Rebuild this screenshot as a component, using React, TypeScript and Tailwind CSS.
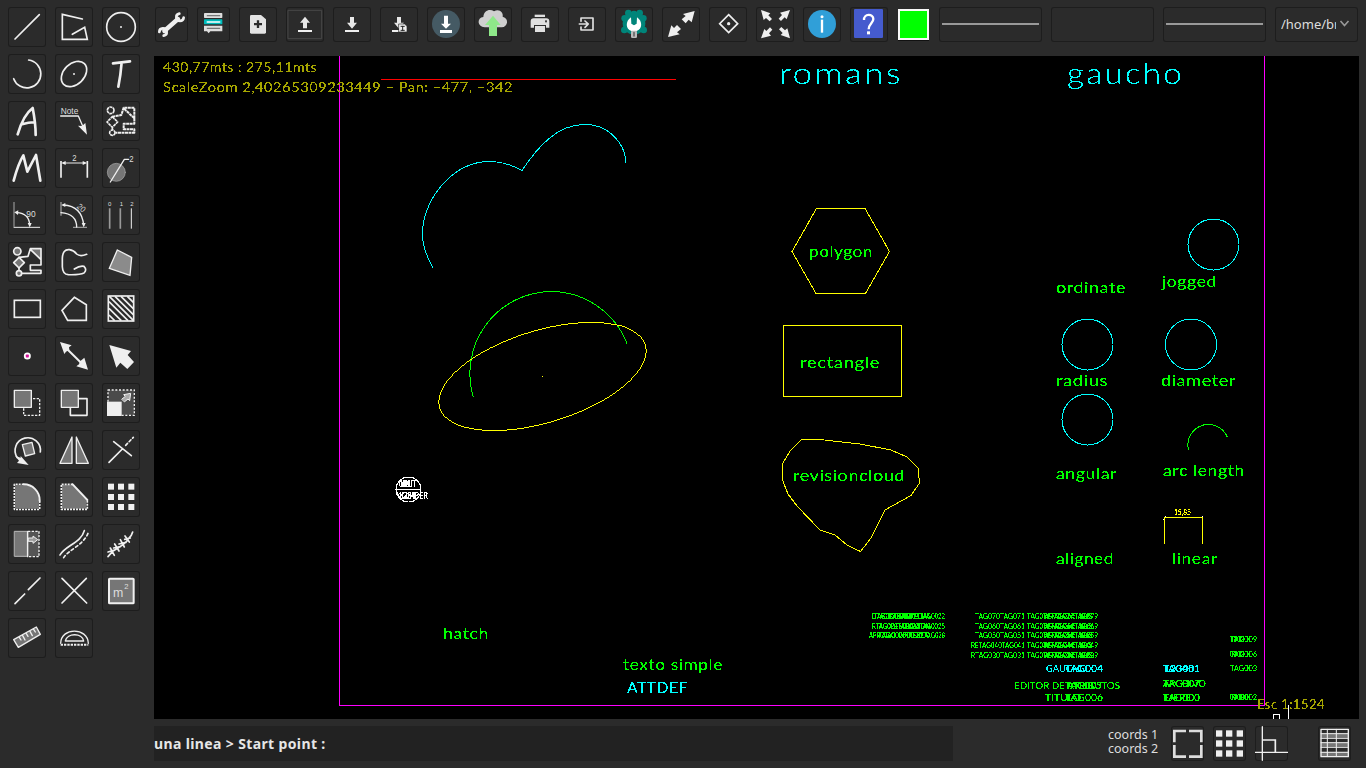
import React from "react";

const W = "#efefef";
const G = "#767676";

function Tool({ x, y, w = 38, h = 40, children }: { x: number; y: number; w?: number; h?: number; children?: React.ReactNode }) {
  return (
    <button className="block shrink-0 rounded-[3px] shadow-[inset_0_0_0_1px_#1d1d1d]">
      <svg
        width={w}
        height={h}
        viewBox={`${x} ${y} ${w * 3} ${h * 3}`}
        fill="none"
        stroke={W}
        strokeWidth="5"
        strokeLinecap="round"
        strokeLinejoin="round"
        fontFamily="'Liberation Sans', sans-serif"
        className="block"
      >
        {children}
      </svg>
    </button>
  );
}

function T({ x, y, s, children, r, w }: { x: number; y: number; s: number; children: string; r?: number; w?: number }) {
  return (
    <text x={x} y={y} fontSize={s} fill="#dedede" stroke="none" textLength={w} lengthAdjust="spacingAndGlyphs" transform={r ? `rotate(${r} ${x} ${y})` : undefined}>
      {children}
    </text>
  );
}

const P = ({ p, f = W }: { p: string; f?: string }) => <polygon points={p} fill={f} stroke="none" />;

function Dots({ xs, ys, s = 18 }: { xs: number[]; ys: number[]; s?: number }) {
  return (
    <g fill={W} stroke="none">
      {ys.map((y) => xs.map((x) => <rect key={`${x}-${y}`} x={x} y={y} width={s} height={s} />))}
    </g>
  );
}

const sidebar: React.ReactNode[][] = [
  [
    <path d="M45 117L118 44" />,
    <path d="M247 57L187 43V118H262L254 82L217 103" strokeLinejoin="miter" />,
    <><circle cx="363" cy="81" r="43" /><circle cx="363" cy="81" r="3" fill={W} stroke="none" /></>,
  ],
  [
    <path d="M86 180A42 42 0 1 1 41 236" />,
    <><ellipse cx="222" cy="222" rx="44" ry="31" transform="rotate(-45 222 222)" /><circle cx="222" cy="222" r="3" fill={W} stroke="none" /></>,
    <path d="M339 190L390 184M365 187Q362 225 355 260" strokeWidth="8" />,
  ],
  [
    <path d="M53 403Q70 345 98 324Q107 370 107 405M66 373Q90 366 105 367" strokeWidth="8" />,
    <><T x={182} y={343} s={25} w={53}>Note</T><path d="M182 348H235L249 380" strokeWidth="4" /><P p="261,404 234,377 246,378 256,369" /></>,
    <g strokeWidth="6" strokeDasharray="9 1.5" strokeLinecap="butt">
      <circle cx="332" cy="331" r="10" strokeWidth="5" />
      <path d="M337 350L353 366L337 382L321 366ZM337 382V390" strokeWidth="5" />
      <circle cx="337" cy="398" r="8" strokeWidth="5" />
      <path d="M337 350L364 345L371 323H403V355L371 325M403 355V371H371V388H403V398H346" />
    </g>,
  ],
  [
    <path d="M41 542Q55 490 70 466L82 515L108 465L121 542" strokeWidth="8" />,
    <><path d="M183 483V533M262 483V533" strokeWidth="5" strokeLinecap="butt" /><path d="M190 489H255" strokeWidth="3" /><P p="184,489 197,483 197,495" /><P p="261,489 248,483 248,495" /><T x={217} y={483} s={26} w={13}>2</T></>,
    <><circle cx="349" cy="517" r="27" fill={G} stroke="#aaa" strokeWidth="2" /><path d="M331 546L373 478H386" strokeWidth="4" /><T x={388} y={486} s={27} w={13}>2</T></>,
  ],
  [
    <><path d="M42 606V680" stroke="#777" strokeWidth="5" strokeLinecap="butt" /><path d="M42 682H119" strokeWidth="3" /><path d="M50 638Q88 640 89 676" strokeWidth="4" /><P p="43,637 55,631 54,645" /><P p="89,682 83,669 95,669" /><T x={79} y={652} s={28} w={28}>90</T></>,
    <><path d="M183 606V647M219 682H261" stroke="#999" strokeWidth="4" strokeLinecap="butt" /><path d="M190 615Q246 618 251 676M183 638Q230 642 230 681" strokeWidth="4" /><P p="184,615 196,609 196,621" /><P p="251,682 245,669 257,669" /><T x={229} y={622} s={25} w={25} r={42}>20</T></>,
    <><path d="M329 625V686M361 625V686" stroke="#999" strokeLinecap="butt" /><path d="M394 625V686" strokeWidth="3" strokeLinecap="butt" /><T x={324} y={619} s={18}>0</T><T x={359} y={619} s={18}>1</T><T x={391} y={619} s={18}>2</T></>,
  ],
  [
    <><circle cx="52" cy="49" r="11" fill={G} /><path d="M91 41H123V74Z" fill={G} stroke="none" /><path d="M57 67L84 64L91 41H123V74L91 43M123 74V90H91V106H123V115H66M57 99V107" /><path d="M57 67L73 83L57 99L41 83Z" fill={G} /><circle cx="57" cy="115" r="8" fill={G} /></>,
    <path d="M223 102Q240 91 252 94Q262 105 252 114Q240 120 205 119Q188 118 187 95V70Q188 42 208 44Q221 46 230 57Q240 66 260 58" strokeWidth="5" />,
    <path d="M352 45L395 67L390 121L328 100Z" fill="#8b8b8b" strokeWidth="4" strokeLinejoin="miter" />,
  ],
  [
    <rect x="43" y="196" width="78" height="51" strokeLinejoin="miter" />,
    <path d="M223 187L259 209V256H203L186 226Z" strokeLinejoin="miter" />,
    <><rect x="325" y="183" width="76" height="75" strokeLinejoin="miter" /><path d="M327 240L344 257M327 220L364 257M327 200L384 257M328 184L400 256M345 184L400 239M363 184L400 221M382 184L400 202" strokeLinecap="butt" /></>,
  ],
  [
    <><circle cx="82" cy="363" r="10.500" fill="#fff" stroke="none" /><rect x="77.500" y="358.500" width="9" height="9" rx="2" fill="#d5149a" stroke="none" /></>,
    <><path d="M195 336L250 390" strokeWidth="6" /><P p="180,321 215,331 207,337 208,345 198,350 193,357" /><P p="264,404 229,394 237,388 240,379 245,375 253,368" /></>,
    <P p="328,330 393,348 383,360 402,381 382,402 361,383 349,398" />,
  ],
  [
    <><path d="M71 520V541H119V491H97" strokeDasharray="7 4" strokeLinecap="butt" strokeWidth="4" /><rect x="43" y="466" width="51" height="51" fill={G} strokeWidth="4" /></>,
    <><rect x="211" y="491" width="50" height="50" /><rect x="184" y="466" width="51" height="51" fill={G} strokeWidth="4" /></>,
    <><rect x="324" y="465" width="79" height="76" fill="#4b4b4b" strokeDasharray="6 5" strokeLinecap="butt" strokeWidth="4" /><rect x="321" y="500" width="44" height="43" fill={W} stroke="none" /><path d="M366 492L376 484L371 479L392 475L389 497L384 492L374 500Z" fill="#aaa" strokeWidth="3" /></>,
  ],
  [
    <><path d="M121 651A38 38 0 1 0 52 668" /><P p="45,662 62,668 62,663 86,690 51,684 57,677" /><path d="M67 629L96 622L104 656L76 663Z" fill={G} strokeWidth="4" /></>,
    <g fill={G} strokeWidth="4"><path d="M216 606V685H180Z" /><path d="M229 606V685H265Z" /></g>,
    <><path d="M327 682L367 642M341 620L394 662" /><path d="M377 631L400 607" strokeDasharray="8 7" /></>,
  ],
  [
    <><path d="M71 43H43V118H119V92" fill="none" strokeDasharray="6 3" strokeLinecap="butt" /><path d="M45 45H71A47 47 0 0 1 117 92V116H45Z" fill={G} stroke="none" /><path d="M71 43A48 48 0 0 1 119 92" strokeWidth="6" /></>,
    <><path d="M186 45H218L259 92V116H186Z" fill={G} stroke="none" /><path d="M218 43H184V118H262V90" strokeDasharray="6 3" strokeLinecap="butt" /><path d="M218 43L262 90" strokeWidth="6" /></>,
    <Dots xs={[324, 354, 385]} ys={[41, 72, 102]} />,
  ],
  [
    <><rect x="44" y="184" width="38" height="75" fill={G} stroke="#bbb" strokeWidth="3" /><rect x="83" y="184" width="34" height="75" fill="#555" stroke="none" /><path d="M83 184V260" strokeWidth="4" /><path d="M84 184H117V260H84" strokeDasharray="7 4" strokeWidth="4" strokeLinecap="butt" /><path d="M86 204H99V198L113 209L99 220V214H86Z" fill="#999" strokeWidth="3" /></>,
    <><path d="M180 255C193 228 244 218 253 182" /><path d="M191 263C204 241 250 225 264 190" strokeDasharray="8 8" /></>,
    <path d="M324 260L338 244Q379 220 386 205Q395 198 398 186M331 234L343 256M324 246L344 240M344 222L357 243M341 234L361 230M361 209L373 231M357 222L378 217M375 198L388 216M374 208L391 204" strokeWidth="5" />,
  ],
  [
    <path d="M45 401L74 372M85 359L120 324" />,
    <path d="M186 325L260 399M259 325L186 399" />,
    <><rect x="327" y="326" width="74" height="74" rx="2" fill={G} strokeWidth="6" /><T x={339} y={382} s={37}>m</T><T x={373} y={357} s={23}>2</T></>,
  ],
  [
    <path d="M41 509L109 471L121 493L55 532ZM58 502L63 510M68 497L75 510M79 491L84 499M90 484L97 497M101 478L106 486" fill={G} strokeWidth="4" />,
    <><path d="M182 520C183 471 263 471 265 520" strokeWidth="4" /><path d="M182 524H265" strokeWidth="6" strokeDasharray="7 3" strokeLinecap="butt" /><path d="M196 513C201 488 247 488 251 513Z" strokeWidth="4" /></>,
  ],
];

function Arrow({ x, y, r = 0 }: { x: number; y: number; r?: number }) {
  return <polygon points="0,0 28,10 22,16 33,27 26,34 15,24 8,30" transform={`translate(${x} ${y}) rotate(${r})`} fill={W} stroke="none" />;
}

function TopBar() {
  return (
    <div className="flex h-14 items-start gap-[9px] pl-px pt-[7px]">
      <Tool x={15} y={21} w={33} h={35}>
        <path d="M43 93L84 57" strokeWidth="13" />
        <path d="M88 41A11 11 0 1 0 101 53" strokeWidth="8" />
        <path d="M28 96A11 11 0 1 1 41 107" strokeWidth="8" />
      </Tool>
      <Tool x={141} y={21} w={33} h={35}>
        <g fill="#ddd" stroke="none"><rect x="162" y="39" width="55" height="15" rx="2" /><rect x="162" y="58" width="55" height="15" rx="2" fill="#00bcbc" /><path d="M162 77H217V94H181L176 100L171 94H162Z" /></g>
        <path d="M172 47H209M172 85H209" stroke="#777" strokeWidth="4" /><path d="M172 66H209" stroke="#fff" />
      </Tool>
      <Tool x={267} y={21} h={35}>
        <path d="M304 45H333L348 58V97Q348 101 344 101H304Q300 101 300 97V49Q300 45 304 45Z" fill="#e4e4e4" stroke="none" />
        <path d="M324 61V84M312 72.500H336" stroke="#2b2b2b" strokeWidth="7" strokeLinecap="butt" />
      </Tool>
      <Tool x={408} y={21} h={35}>
        <rect x="415" y="31" width="100" height="85" stroke="#484848" strokeWidth="3" />
        <P p="465,50 480,68 471,68 471,85 459,85 459,68 450,68" f="#e8e8e8" /><path d="M444 93H486" strokeLinecap="butt" strokeWidth="6" />
      </Tool>
      <Tool x={549} y={21} h={35}>
        <P p="600,51 612,51 612,68 621,68 606,86 591,68 600,68" f="#e8e8e8" /><path d="M585 93H627" strokeLinecap="butt" strokeWidth="6" />
      </Tool>
      <Tool x={690} y={21} h={35}>
        <P p="741,51 753,51 753,68 762,68 747,86 732,68 741,68" f="#e8e8e8" /><path d="M726 93H768" strokeLinecap="butt" strokeWidth="6" />
        <path d="M747 72H764L771 79V96H747Z" fill="#eee" stroke="#2b2b2b" strokeWidth="2" /><path d="M753 79H763M758 79V91M753 91H763" stroke="#222" strokeWidth="3" />
      </Tool>
      <Tool x={831} y={21} h={35}>
        <circle cx="888" cy="72" r="42" fill="#455a64" stroke="none" />
        <P p="882,47 894,47 894,71 903,71 888,86 873,71 882,71" f="#fff" /><path d="M870 94.500H906" stroke="#fff" strokeLinecap="butt" strokeWidth="9" />
      </Tool>
      <Tool x={972} y={21} h={35}>
        <path d="M1004 82C981 80 980 53 1000 51C1001 31 1020 25 1032 34C1047 24 1061 37 1058 50C1078 55 1074 81 1055 82Z" fill="#cfcfcf" stroke="none" />
        <P p="1029,47 1052,75 1041,75 1041,108 1017,108 1017,75 1005,75" f="#8ee889" />
      </Tool>
      <Tool x={1113} y={21} h={35}>
        <g fill="#e0e0e0" stroke="none"><rect x="1154" y="44" width="31" height="7" /><path d="M1151 55H1189Q1198 55 1198 64V83H1188V75H1152V83H1142V64Q1142 55 1151 55Z" /><rect x="1155" y="78" width="30" height="18" /></g>
        <rect x="1185" y="61" width="6" height="6" fill="#444" stroke="none" />
      </Tool>
      <Tool x={1254} y={21} h={35}>
        <path d="M1293 64V54H1329V90H1293V81M1288 72H1315M1305 63L1315 72L1305 82" stroke="#e0e0e0" strokeWidth="5" />
      </Tool>
      <Tool x={45} y={21} h={35}>
        <g fill="#00857a" stroke="none">
          <circle cx="102" cy="70" r="34" /><circle cx="85" cy="39" r="10" /><circle cx="119" cy="39" r="10" /><circle cx="74" cy="55" r="10" /><circle cx="130" cy="55" r="10" /><circle cx="73" cy="90" r="10" /><circle cx="131" cy="90" r="10" /><circle cx="102" cy="43" r="11" />
        </g>
        <path d="M93 52L94 71L102 76L110 71L111 52C129 64 127 88 110 93H94C77 88 75 64 93 52Z" fill="#fff" stroke="none" />
        <rect x="93" y="92" width="18" height="22" rx="4" fill="#bbb" stroke="none" /><path d="M102 98V108" stroke="#666" strokeWidth="5" />
      </Tool>
      <Tool x={186} y={21} h={35}>
        <P p="284,33 275,67 266,59 257,70 245,58 257,48 249,42" /><P p="204,111 214,76 222,84 231,75 243,87 231,97 239,103" />
      </Tool>
      <Tool x={327} y={21} h={35}>
        <path d="M386 44L413 71L386 98L359 71Z" strokeLinejoin="miter" /><circle cx="386" cy="71" r="5" fill={W} stroke="none" />
      </Tool>
      <Tool x={468} y={21} h={35}>
        <Arrow x={483} y={30} /><Arrow x={570} y={30} r={90} /><Arrow x={570} y={115} r={180} /><Arrow x={483} y={115} r={270} />
      </Tool>
      <Tool x={609} y={21} h={35}>
        <circle cx="666" cy="72" r="42" fill="#309fd8" stroke="none" /><path d="M666 59V98" stroke="#fff" strokeWidth="7" strokeLinecap="butt" /><circle cx="666" cy="50" r="4.500" fill="#fff" stroke="none" />
      </Tool>
      <Tool x={750} y={21} h={35}>
        <rect x="762" y="27" width="87" height="87" rx="3" fill="#455bce" stroke="none" /><path d="M792 60C791 40 820 40 820 57C820 69 806 71 806 88" stroke="#fff" strokeWidth="7" strokeLinecap="butt" /><rect x="801" y="94" width="9" height="9" fill="#fff" stroke="none" />
      </Tool>
      <div className="mt-[2px] h-[31px] w-[33px] shrink-0 px-px">
        <div className="h-[31px] w-[31px] border-2 border-[#fafafa] bg-[#00ff00] shadow-[0_1px_0_#111]" />
      </div>
      {[true, false, true].map((line, i) => (
        <button key={i} className="flex h-[35px] w-[103px] shrink-0 items-start rounded-[3px] px-[3px] pt-4 shadow-[inset_0_0_0_1px_#1d1d1d]">
          {line && <span className="h-[2px] w-full bg-[#999]" />}
        </button>
      ))}
      <button className="flex h-[35px] w-[83px] shrink-0 items-center rounded-[3px] pl-[6px] font-['Noto_Sans',sans-serif] text-[13px] text-[#dedede] shadow-[inset_0_0_0_1px_#1d1d1d]">
        <span className="w-[55px] overflow-hidden whitespace-nowrap pt-px text-left">/home/br</span>
        <svg width="11" height="8" viewBox="0 0 11 8" className="ml-[3px] -mt-[2px]" fill="none" stroke="#999" strokeWidth="1.600"><path d="M1.500 1L5.500 5.500L9.500 1" /></svg>
      </button>
    </div>
  );
}

type Label = [string, number, number, number, number, string?];
const GREEN = "#00ff00";
const CYAN = "#00ffff";
const OLIVE = "#a5a500";
const YELLOW = "#ffff00";

// text, left, right, baseline, font size, colour
const labels: Label[] = [
  ["430,77mts : 275,11mts", 163, 317, 72, 14, OLIVE],
  ["ScaleZoom 2,40265309233449 – Pan: –477, –342", 163, 513, 92, 14, OLIVE],
  ["romans", 779, 903, 84, 29, CYAN],
  ["gaucho", 1067, 1184, 84, 29, CYAN],
  ["polygon", 809, 873, 257, 16],
  ["rectangle", 800, 880, 368, 16],
  ["revisioncloud", 793, 905, 481, 16],
  ["ordinate", 1056, 1126, 293, 16],
  ["jogged", 1162, 1217, 287, 16],
  ["radius", 1056, 1108, 386, 16],
  ["diameter", 1161, 1236, 386, 16],
  ["angular", 1056, 1117, 479, 16],
  ["arc length", 1163, 1245, 476, 16],
  ["aligned", 1056, 1114, 564, 16],
  ["linear", 1172, 1218, 564, 16],
  ["15,85", 1174, 1191, 515, 8, YELLOW],
  ["hatch", 443, 489, 639, 16],
  ["texto simple", 623, 723, 670, 16],
  ["ATTDEF", 627, 688, 693, 15, CYAN],
  ["GAUCHO", 1046, 1087, 672, 10, CYAN],
  ["TAG004", 1065, 1103, 672, 10, CYAN],
  ["TAG001", 1163, 1200, 672, 10, CYAN],
  ["123451", 1164, 1200, 672, 10, CYAN],
  ["EDITOR DE ATRIBUTOS", 1014, 1120, 689, 10],
  ["TAG005", 1065, 1102, 689, 10],
  ["TITULO", 1045, 1081, 701, 10],
  ["TAG006", 1065, 1103, 701, 10],
  ["ARCHIVO", 1163, 1206, 687, 10],
  ["TAG007", 1163, 1200, 687, 10],
  ["EJERC", 1163, 1192, 701, 10],
  ["TAG000", 1163, 1200, 701, 10],
  ["TAG009", 1230, 1257, 642, 7],
  ["1000", 1230, 1244, 642, 7],
  ["TAG006", 1230, 1257, 657, 7],
  ["0000", 1230, 1244, 657, 7],
  ["TAG003", 1230, 1257, 671, 7],
  ["TAG002", 1230, 1257, 700, 7],
  ["00000", 1230, 1248, 700, 7],
  ["DTAG020TAG021TAG0022", 872, 945, 619, 7],
  ["TAG0BASE00FECHA", 874, 930, 619, 7],
  ["RTAG023TAG024TAG0025", 872, 945, 629, 7],
  ["TAG0DESCRIPCION", 876, 930, 629, 7],
  ["APROTAG026TAG027AG028", 869, 945, 638, 7],
  ["TAG0000000000", 878, 930, 638, 7],
  ["Esc 1:1524", 1257, 1325, 709, 14, OLIVE],
];

[7, 6, 5, 4, 3].forEach((n, i) => {
  const y = [619, 628.5, 638, 648, 657.5][i];
  labels.push([`${n === 4 ? "RE" : n === 3 ? "R" : ""}TAG0${n}0TAG0${n}1`, n < 5 ? 971 : 975, 1025, y, 7]);
  labels.push([`TAG0${n}2TAG0${n}4TAG0${n}9`, 1027, 1098, y, 7]);
  labels.push([`TAG0${n}3TAG0${n}5TAG0${n}8`, 1043, 1092, y, 7]);
});

function Drawing() {
  return (
    <svg width="1205" height="663" viewBox="154 56 1205 663" className="block shrink-0 bg-black" fill="none" strokeWidth="1">
      <defs>
        <filter id="aliased" x="154" y="56" width="1205" height="663" filterUnits="userSpaceOnUse" colorInterpolationFilters="sRGB">
          <feComponentTransfer>
            <feFuncA type="discrete" tableValues="0 0 1 1 1" />
          </feComponentTransfer>
        </filter>
      </defs>
      <g shapeRendering="crispEdges">
        <path d="M339.500 56V705.500H1264.500V56" stroke="#ff00ff" />
        <path d="M381 79.500H676" stroke="#ff0000" />
        <g stroke={CYAN}>
          <path d="M433 267.500C428 259 422.500 247 422.500 234C422.500 200 452 161.500 490 161.500C502 161.500 512 165 522 170.500C537 148 557 124 585 124.500C607 124 625 142 626 162.500" />
          <circle cx="1213.500" cy="244.500" r="25.500" /><circle cx="1087.500" cy="344.500" r="25.500" />
          <circle cx="1191" cy="344.500" r="25.500" /><circle cx="1087.500" cy="419.500" r="25.500" />
        </g>
        <g stroke={GREEN}>
          <path d="M473.500 397.500A82 82 0 0 1 551.500 291.500A82 82 0 0 1 627 343.500" />
          <path d="M1188.500 450A20.500 20.500 0 0 1 1208.500 424.500A20.500 20.500 0 0 1 1227.500 437.500" />
        </g>
        <g stroke={YELLOW}>
          <ellipse cx="542.500" cy="376.500" rx="107.500" ry="46" transform="rotate(-17 542.500 376.500)" />
          <path d="M542 376.500H543" />
          <path d="M792 251.500L816.500 208.500H865L889.500 251.500L865.500 293.500H816Z" />
          <rect x="783.500" y="325.500" width="118" height="71" />
          <path d="M801.500 439.500H820L860 444L891 450L907 457L918 468L919.500 483L911 495.500L885 510L871 538L860.500 551.500L847 545L835 535L820 530L797 506L788 494L782.500 480L783 463L790 451Z" />
          <path d="M1164.500 544V517.500H1202.500V544" />
        </g>
        <path d="M1163 519H1164M1165 516H1166M1202 516.500H1203M1288.500 705V719M1273.500 719V714.500H1279.500V719" stroke="#fff" />
        <g stroke="#fff"><circle cx="408.500" cy="489.500" r="12.500" /><path d="M396 489.500H421" /></g>
      </g>
      <g fontFamily="Lato, sans-serif" stroke="none" filter="url(#aliased)">
        {labels.map(([t, x1, x2, y, s, c], i) => (
          <text key={i} x={x1} y={y} fontSize={s} fill={c ?? GREEN} fontWeight={s > 20 ? 300 : 400} letterSpacing={s > 20 ? 2 : s > 11 ? 0.5 : 0} textLength={x2 - x1} lengthAdjust="spacingAndGlyphs">{t}</text>
        ))}
        <g fill="#fff" fontSize="9">
          <text x="398" y="487" textLength="19">UNIT</text>
          <text x="399" y="487" textLength="12">101</text>
          <text x="396" y="499" textLength="32" lengthAdjust="spacingAndGlyphs">NUMBER</text>
          <text x="398" y="499" textLength="18">1234</text>
        </g>
      </g>
    </svg>
  );
}

export default function App() {
  return (
    <div className="flex h-[768px] w-[1366px] overflow-hidden bg-[#2b2b2b]">
      <aside className="w-[154px] shrink-0 pl-2 pt-[7px]">
        <div className="grid grid-cols-[38px_38px_38px] gap-x-[9px] gap-y-[7px]">
          {sidebar.map((row, r) => row.map((icon, c) => (
            <Tool key={`${r}-${c}`} x={24 + 141 * c} y={21 + 141 * (r % 5)}>{icon}</Tool>
          )))}
        </div>
      </aside>
      <main className="flex min-w-0 flex-1 flex-col">
        <TopBar />
        <Drawing />
        <footer className="flex h-[49px] items-start pt-[7px] font-['Noto_Sans',sans-serif]">
          <div className="flex h-[35px] w-[799px] items-center bg-[#222222] text-[14px] font-bold text-[#e6e6e6]">
            <span className="whitespace-pre tracking-[0.37px]">una linea &gt; Start point :</span>
          </div>
          <div className="ml-[155px] w-[63px] pt-[2px] text-[12.500px] leading-[14px] text-[#dedede]">
            <div>coords 1</div>
            <div>coords 2</div>
          </div>
          <div className="flex items-start gap-[9px]">
            <Tool x={933} y={378} w={33} h={35}>
              <path d="M978 393H943V427M987 393H1024V427M943 435V470H978M1024 435V470H987" strokeWidth="8" strokeLinecap="butt" strokeLinejoin="miter" stroke="#ddd" />
            </Tool>
            <Tool x={1059} y={378} w={33} h={35}><Dots xs={[1068, 1098, 1130]} ys={[391, 421, 451]} s={19} /></Tool>
            <Tool x={1185} y={378} w={33} h={35}>
              <path d="M1207 380V481M1185 457H1286" strokeWidth="4" /><path d="M1209 420H1246V455" strokeLinejoin="miter" />
            </Tool>
          </div>
          <div className="ml-[30px]">
            <Tool x={1374} y={378} w={33} h={35}>
              <rect x="1383" y="388" width="82" height="82" fill="#2b2b2b" stroke="none" />
              <path d="M1383 407H1465M1383 434H1465M1383 462H1465" stroke={G} strokeWidth="13" strokeLinecap="butt" />
              <rect x="1383" y="388" width="82" height="82" strokeWidth="4" />
              <path d="M1383 401H1465M1383 415H1465M1383 428H1465M1383 442H1465M1383 457H1465M1402 388V470M1429 388V470" strokeWidth="3" />
            </Tool>
          </div>
        </footer>
      </main>
    </div>
  );
}
